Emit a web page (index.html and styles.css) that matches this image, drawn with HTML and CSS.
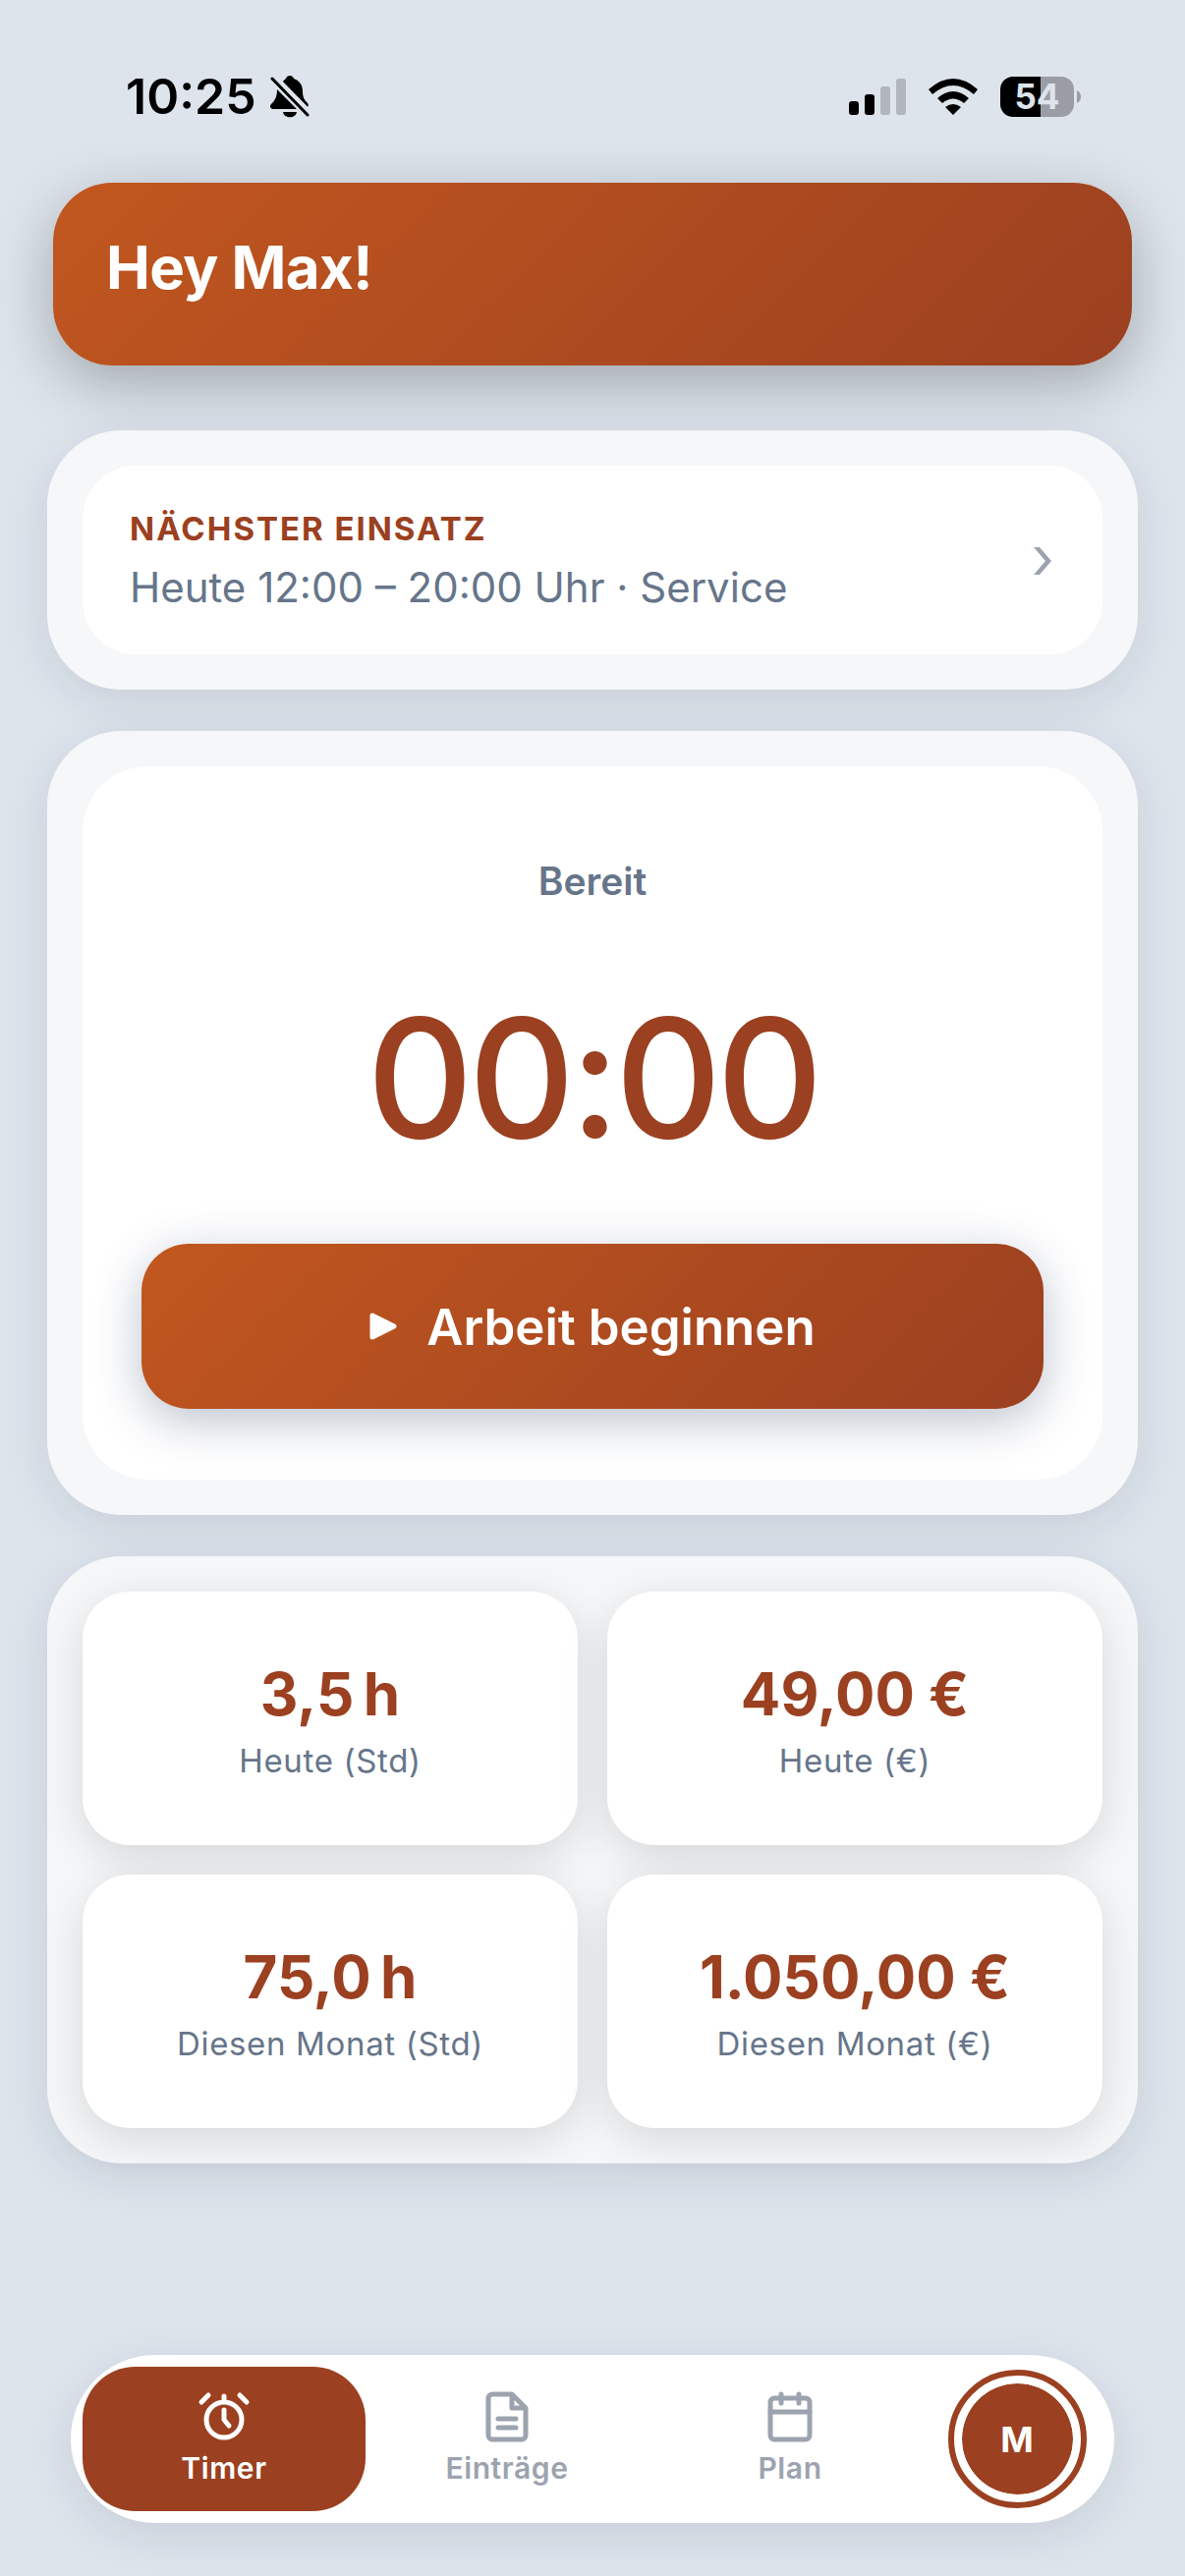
FILE: index.html
```html
<!DOCTYPE html>
<html lang="de">
<head>
  <meta charset="UTF-8">
  <meta name="viewport" content="width=device-width, initial-scale=1.0, viewport-fit=cover">
  <title>Timer</title>
  <link rel="stylesheet" href="styles.css">
</head>
<body>
<div class="app">
  <div class="statusbar">
    <div class="status-left">
      <span class="clock">10:25</span>
      <svg class="icon-bell" viewBox="0 0 40 44" aria-hidden="true">
        <path d="M12 8c1-2 3-3 4-4 1-4 7-4 8 0 6 2 9 7 9 13 0 6 2 9 5 12 1 1 1 3 0 4z" fill="#000"/>
        <path d="M7 15l20 20H3c-3 0-4-3-2-5 4-4 6-8 6-15z" fill="#000"/>
        <path d="M13 38h14c-1 7-13 7-14 0z" fill="#000"/>
        <path d="M5 1l36 37" stroke="#dde4ec" stroke-width="3"/>
        <path d="M2 4l36 37" stroke="#000" stroke-width="3" stroke-linecap="round"/>
      </svg>
    </div>
    <div class="status-right">
      <svg class="icon-signal" viewBox="0 0 58 38" aria-hidden="true">
        <rect x="0" y="24" width="10" height="14" rx="3"/>
        <rect x="16" y="17" width="10" height="21" rx="3"/>
        <rect x="32" y="9" width="10" height="29" rx="3" fill="#b0b5be"/>
        <rect x="48" y="1" width="10" height="37" rx="3" fill="#b0b5be"/>
      </svg>
      <svg class="icon-wifi" viewBox="0 0 52 38" aria-hidden="true">
        <path d="M1 12Q26-10 51 12l-4 5Q26-1 5 17z"/>
        <path d="M10 21Q26 7 42 21l-5 5Q26 17 15 26z"/>
        <path d="M18 30Q26 24 34 30L26 38z"/>
      </svg>
      <div class="battery"><span class="battery-level">54</span></div>
      <svg class="battery-tip" viewBox="0 0 4 13" aria-hidden="true"><path d="M0 0Q4 2 4 6.500T0 13z"/></svg>
    </div>
  </div>

  <header class="hero">
    <h1>Hey Max!</h1>
  </header>

  <main class="content">
    <section class="panel">
      <a class="shift" href="#plan">
        <span class="shift-text">
          <span class="shift-label">NÄCHSTER EINSATZ</span>
          <span class="shift-time">Heute 12:00 – 20:00 Uhr · Service</span>
        </span>
        <svg class="icon-chevron" viewBox="0 0 18 28" aria-hidden="true"><path d="M0 0h6l12 14L6 28H0l12-14z"/></svg>
      </a>
    </section>

    <section class="panel">
      <div class="timer">
        <p class="timer-state">Bereit</p>
        <div class="timer-value">00:00</div>
        <button type="button" class="btn-start">
          <svg class="icon-play" viewBox="0 0 28 28" aria-hidden="true"><path d="M3 3v22L25 14z" stroke="#fff" stroke-width="5" stroke-linejoin="round"/></svg>
          Arbeit beginnen
        </button>
      </div>
    </section>

    <section class="panel stats">
      <div class="stat">
        <strong>3,5&#8239;h</strong>
        <span>Heute (Std)</span>
      </div>
      <div class="stat">
        <strong>49,00&nbsp;€</strong>
        <span>Heute (€)</span>
      </div>
      <div class="stat">
        <strong>75,0&#8239;h</strong>
        <span>Diesen Monat (Std)</span>
      </div>
      <div class="stat">
        <strong>1.050,00&nbsp;€</strong>
        <span>Diesen Monat (€)</span>
      </div>
    </section>
  </main>

  <nav class="tabbar">
    <a class="tab active" href="#timer">
      <svg viewBox="0 0 54 54" aria-hidden="true">
        <circle cx="27" cy="30" r="18"/>
        <path d="M27 6v5M27 20v10l5 6M4 12l7-7M50 12l-7-7"/>
      </svg>
      Timer
    </a>
    <a class="tab" href="#eintraege">
      <svg viewBox="0 0 54 54" aria-hidden="true">
        <path d="M32 4H12a4 4 0 0 0-4 4v38a4 4 0 0 0 4 4h30a4 4 0 0 0 4-4V18zM32 4v14h14M18 29h18M18 38h18"/>
      </svg>
      Einträge
    </a>
    <a class="tab" href="#plan">
      <svg viewBox="0 0 54 54" aria-hidden="true">
        <rect x="7" y="8" width="40" height="42" rx="4"/>
        <path d="M18 4v9M36 4v9M7 22h40"/>
      </svg>
      Plan
    </a>
    <a class="profile" href="#profil" aria-label="Profil"><span class="avatar">M</span></a>
  </nav>
</div>
</body>
</html>
```
FILE: styles.css
```css
* {
  box-sizing: border-box;
}
body {
  margin: 0;
  background-color: #dde4ec;
  font-family: Inter, "Liberation Sans", sans-serif;
  color: #9b4020;
}
h1, p {
  margin: 0;
}
a {
  color: inherit;
  text-decoration: none;
}
.app {
  min-height: 100vh;
  padding: 66px 48px 54px;
  display: flex;
  flex-direction: column;
}

/* Statusleiste */
.statusbar {
  display: flex;
  justify-content: space-between;
  align-items: center;
  height: 64px;
  padding: 0 58px 0 80px;
  color: #000;
}
.status-left, .status-right {
  display: flex;
  align-items: center;
}
.clock {
  font-size: 50px;
  font-weight: 600;
}
.icon-bell {
  width: 40px;
  height: 44px;
  margin-left: 14px;
}
.icon-signal {
  width: 58px;
  height: 38px;
}
.icon-wifi {
  width: 52px;
  height: 38px;
  margin: 0 22px;
}
.battery {
  width: 75px;
  height: 41px;
  border-radius: 13px;
  background: linear-gradient(90deg, #000 55%, #9b9da6 55%);
  display: flex;
  justify-content: center;
  align-items: center;
}
.battery-level {
  font-size: 35px;
  font-weight: 700;
  color: #dde4ec;
}
.battery-tip {
  width: 4px;
  height: 13px;
  margin-left: 3px;
  fill: #9b9da6;
}

.hero {
  margin: 56px 6px 0;
  padding: 48px 54px;
  min-height: 186px;
  border-radius: 60px;
  background: linear-gradient(135deg, #c2571f, #9b4020);
  box-shadow: 0 18px 60px rgba(0, 0, 0, 0.27);
  color: #fff;
}
.hero h1 {
  font-size: 60px;
  line-height: 76px;
  font-weight: 700;
  letter-spacing: -0.01em;
}

.content {
  display: flex;
  flex-direction: column;
  gap: 42px;
  margin: 66px 0 48px;
}
.panel {
  padding: 36px;
  border-radius: 76px;
  background-color: rgba(255, 255, 255, 0.7);
  box-shadow: 0 12px 48px rgba(15, 30, 50, 0.1);
}

/* Nächster Einsatz */
.shift {
  display: flex;
  justify-content: space-between;
  align-items: center;
  min-height: 192px;
  padding: 42px 52px 40px 48px;
  border-radius: 54px;
  background-color: #fff;
}
.shift-text {
  display: flex;
  flex-direction: column;
  gap: 10px;
}
.shift-label {
  font-size: 33px;
  line-height: 44px;
  font-weight: 700;
  letter-spacing: 0.06em;
}
.shift-time {
  font-size: 42px;
  line-height: 56px;
  color: #66758a;
}
.icon-chevron {
  width: 18px;
  height: 28px;
  fill: #9ca3af;
}

/* Timer */
.timer {
  padding: 90px 60px 72px;
  border-radius: 66px;
  background-color: #fff;
  text-align: center;
}
.timer-state {
  font-size: 39px;
  line-height: 54px;
  font-weight: 600;
  color: #66758a;
}
.timer-value {
  padding: 74px 0 70px;
  font-size: 168px;
  line-height: 198px;
  font-weight: 500;
  letter-spacing: -0.03em;
}
.btn-start {
  display: flex;
  justify-content: center;
  align-items: center;
  gap: 30px;
  width: 100%;
  height: 168px;
  border: 0;
  border-radius: 48px;
  background: linear-gradient(135deg, #c2571f, #9b4020);
  box-shadow: 0 12px 48px rgba(30, 50, 90, 0.3);
  color: #fff;
  font-family: inherit;
  font-size: 51px;
  font-weight: 600;
}
.icon-play {
  width: 28px;
  height: 28px;
  fill: #fff;
}

/* Statistik */
.stats {
  display: grid;
  grid-template-columns: 1fr 1fr;
  gap: 30px;
}
.stat {
  display: flex;
  flex-direction: column;
  align-items: center;
  gap: 10px;
  min-height: 258px;
  padding: 68px 24px 64px;
  border-radius: 48px;
  background-color: #fff;
  box-shadow: 0 12px 48px rgba(0, 0, 0, 0.13);
}
.stat strong {
  font-size: 60px;
  line-height: 72px;
  font-weight: 700;
}
.stat span {
  font-size: 33px;
  line-height: 44px;
  letter-spacing: 0.02em;
  color: #66758a;
}

/* Navigation */
.tabbar {
  display: flex;
  margin: auto 24px 0;
  padding: 12px;
  border-radius: 86px;
  background-color: #fff;
  box-shadow: 0 12px 48px rgba(15, 30, 50, 0.1);
}
.tab {
  flex: 1;
  display: flex;
  flex-direction: column;
  align-items: center;
  gap: 4px;
  height: 147px;
  padding-top: 24px;
  border-radius: 54px;
  font-size: 30px;
  line-height: 42px;
  font-weight: 600;
  letter-spacing: 0.02em;
  color: #9ca3af;
}
.tab svg {
  width: 54px;
  height: 54px;
  fill: none;
  stroke: currentColor;
  stroke-width: 5;
  stroke-linecap: round;
  stroke-linejoin: round;
}
.tab.active {
  background-color: #9b4020;
  color: #fff;
}
.profile {
  display: flex;
  justify-content: center;
  align-items: center;
  width: 174px;
}
.avatar {
  display: flex;
  justify-content: center;
  align-items: center;
  width: 141px;
  height: 141px;
  border: 6px solid #9b4020;
  border-radius: 50%;
  padding: 8px;
  background: #9b4020 content-box;
  box-shadow: inset 0 0 0 8px #fff;
  color: #fff;
  font-size: 36px;
  font-weight: 700;
}
```
